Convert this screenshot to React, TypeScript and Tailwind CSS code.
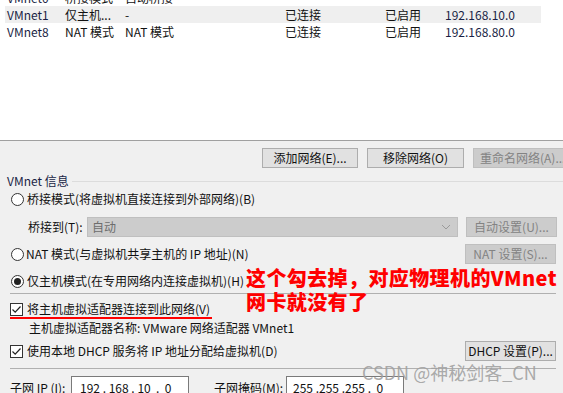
import React from "react"

const font = { fontFamily: '"Noto Sans CJK SC", "Noto Sans", sans-serif' }

const rows = [
  ["VMnet0", "桥接模式", "自动桥接", "", "", ""],
  ["VMnet1", "仅主机...", "-", "已连接", "已启用", "192.168.10.0"],
  ["VMnet8", "NAT 模式", "NAT 模式", "已连接", "已启用", "192.168.80.0"],
]

function Radio({ checked }: { checked?: boolean }) {
  return (
    <span className="w-[13px] h-[13px] rounded-full border border-[#333] bg-white flex items-center justify-center shrink-0">
      {checked && <span className="w-[7px] h-[7px] rounded-full bg-[#222]" />}
    </span>
  )
}

function Check() {
  return (
    <span className="w-[13px] h-[13px] border border-[#333] bg-white flex items-center justify-center shrink-0">
      <svg width="11" height="11" viewBox="0 0 11 11">
        <path d="M1.5 5.5 L4.2 8.2 L9.5 2.5" fill="none" stroke="#222" strokeWidth="1.2" />
      </svg>
    </span>
  )
}

function Btn({ children, disabled, className = "" }: { children: React.ReactNode; disabled?: boolean; className?: string }) {
  return (
    <div
      className={
        "h-[20px] flex items-center justify-center border text-[12px] leading-none whitespace-nowrap overflow-hidden shrink-0 " +
        (disabled ? "border-[#bfbfbf] bg-[#cccccc] text-[#838383] " : "border-[#adadad] bg-[#e1e1e1] text-[#111] ") +
        className
      }
    >
      {children}
    </div>
  )
}

export default function App() {
  return (
    <div className="relative w-[563px] h-[393px] overflow-hidden bg-[#f0f0f0] text-[12px] text-[#111]" style={font}>
      {/* network list */}
      <div className="h-[141px] bg-white border-b border-[#a0a0a0] overflow-hidden">
        <div className="mt-[-11px]">
          {rows.map((r, i) => (
            <div
              key={r[0]}
              className={"h-[17px] flex items-center ml-[5px] w-[536px] leading-none whitespace-nowrap " + (i === 1 ? "bg-[#efefef]" : "")}
            >
              <span className="w-[60px] pl-[2px] text-[#1a1f45]">{r[0]}</span>
              <span className="w-[60px] text-[#111]">{r[1]}</span>
              <span className="w-[160px]">{r[2]}</span>
              <span className="w-[100px]">{r[3]}</span>
              <span className="w-[60px]">{r[4]}</span>
              <span className="text-[#1a1f45]">{r[5]}</span>
            </div>
          ))}
        </div>
      </div>

      {/* list buttons */}
      <div className="flex gap-[9px] mt-[7px] pl-[262px] overflow-hidden">
        <Btn className="w-[96px]">添加网络(E)...</Btn>
        <Btn className="w-[97px]">移除网络(O)</Btn>
        <Btn disabled className="w-[96px] justify-start pl-[6px]">重命名网络(A)...</Btn>
      </div>

      {/* group header */}
      <div className="h-[18px] mt-[4px] flex items-center pl-[7px]">
        <span className="text-[#1a1f45] leading-none">VMnet 信息</span>
        <span className="flex-1 h-px bg-[#dcdcdc] ml-[3px]" />
      </div>

      <div className="h-[18px] flex items-center pl-[11px] gap-[3px] leading-none">
        <Radio />
        <span>桥接模式(将虚拟机直接连接到外部网络)(B)</span>
      </div>

      <div className="h-[20px] mt-[9px] flex items-center leading-none">
        <span className="w-[87px] pl-[28px]">桥接到(T):</span>
        <div className="w-[371px] h-[20px] bg-[#cccccc] border border-[#bfbfbf] flex items-center justify-between pl-[4px] pr-[6px] text-[#6d6d6d]">
          <span>自动</span>
          <svg width="10" height="6" viewBox="0 0 10 6">
            <path d="M1 1 L5 5 L9 1" fill="none" stroke="#9a9a9a" strokeWidth="1" />
          </svg>
        </div>
        <Btn disabled className="w-[91px] ml-[8px]">自动设置(U)...</Btn>
      </div>

      <div className="h-[20px] mt-[7px] flex items-center leading-none">
        <div className="flex items-center pl-[11px] gap-[2px] flex-1">
          <Radio />
          <span>NAT 模式(与虚拟机共享主机的 IP 地址)(N)</span>
        </div>
        <Btn disabled className="w-[91px] mr-[7px]">NAT 设置(S)...</Btn>
      </div>

      <div className="h-[18px] mt-[8px] flex items-center pl-[11px] gap-[3px] leading-none">
        <Radio checked />
        <span>仅主机模式(在专用网络内连接虚拟机)(H)</span>
      </div>

      <div className="h-px bg-[#b0b0b0] mt-[3px] ml-[10px] mr-[7px]" />

      <div className="relative h-[18px] mt-[6px] flex items-center pl-[10px] gap-[4px] leading-none">
        <Check />
        <span>将主机虚拟适配器连接到此网络(V)</span>
        <span className="absolute left-[10px] top-[17px] w-[202px] h-[2px] bg-[#ff0000]" />
      </div>

      <div className="h-[18px] mt-[1px] flex items-center pl-[29px] leading-none">
        主机虚拟适配器名称: VMware 网络适配器 VMnet1
      </div>

      <div className="h-[20px] mt-[4px] flex items-center leading-none">
        <div className="flex items-center pl-[10px] gap-[4px] flex-1">
          <Check />
          <span>使用本地 DHCP 服务将 IP 地址分配给虚拟机(D)</span>
        </div>
        <Btn className="w-[91px] mr-[7px]">DHCP 设置(P)...</Btn>
      </div>

      <div className="h-px bg-[#b0b0b0] mt-[7px] ml-[10px] mr-[7px]" />

      <div className="h-[24px] mt-[7px] flex items-start leading-none">
        <span className="w-[71px] pl-[10px] pt-[6px]">子网 IP (I):</span>
        <div className="w-[118px] h-[24px] bg-white border border-[#7a7a7a] flex items-center pl-[8px] whitespace-pre">192 . 168 . 10  .  0</div>
        <span className="w-[97px] pl-[25px] pt-[6px]">子网掩码(M):</span>
        <div className="w-[118px] h-[24px] bg-white border border-[#7a7a7a] flex items-center pl-[6px] whitespace-pre">255 .255 .255 .  0</div>
      </div>

      {/* annotation */}
      <div className="absolute left-[246px] top-[266px] text-[#ff0000] font-black text-[20px] tracking-[0.4px] leading-[24px] whitespace-nowrap">
        <div>这个勾去掉，对应物理机的VMnet</div>
        <div>网卡就没有了</div>
      </div>

      {/* watermark */}
      <div className="absolute left-[362px] top-[361px] text-[18px] leading-[22px] text-[#a0a0a0]/90 whitespace-nowrap">
        CSDN @神秘剑客_CN
      </div>
    </div>
  )
}
